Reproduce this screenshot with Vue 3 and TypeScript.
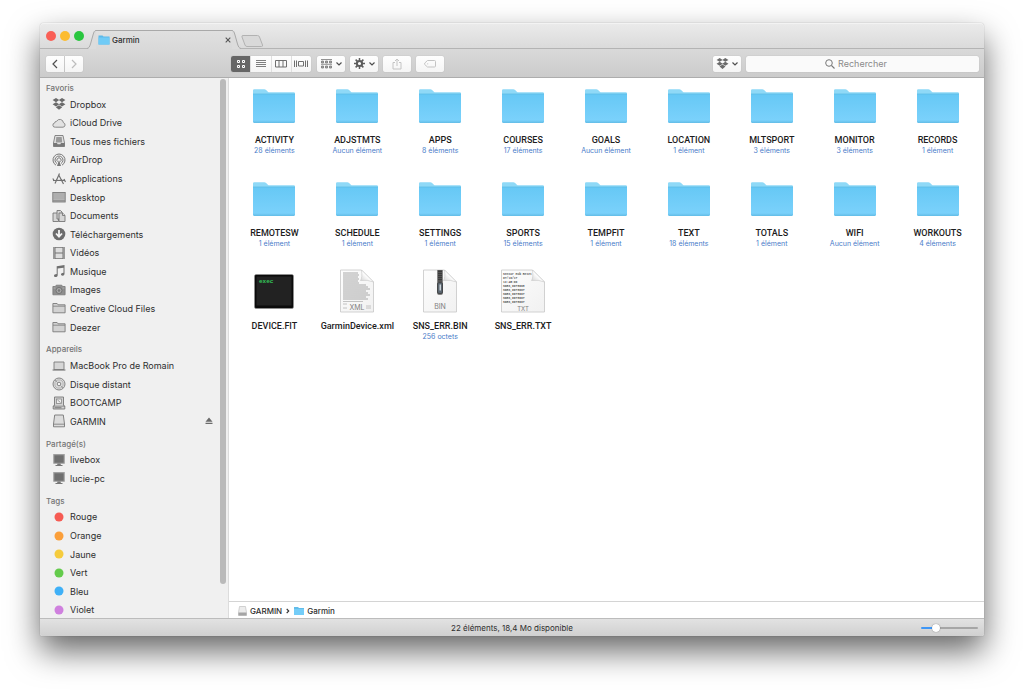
<script setup lang="ts">
import { ref } from 'vue'

interface Place {
  name: string
  icon?: string
  color?: string
  ejectable?: boolean
}

interface Section {
  title: string
  places: Place[]
}

interface Entry {
  name: string
  kind: 'folder' | 'exec' | 'xml' | 'bin' | 'txt'
  info?: string
}

const sections: Section[] = [
  {
    title: 'Favoris',
    places: [
      { name: 'Dropbox', icon: 'dropbox' },
      { name: 'iCloud Drive', icon: 'cloud' },
      { name: 'Tous mes fichiers', icon: 'allfiles' },
      { name: 'AirDrop', icon: 'airdrop' },
      { name: 'Applications', icon: 'apps' },
      { name: 'Desktop', icon: 'desktop' },
      { name: 'Documents', icon: 'documents' },
      { name: 'Téléchargements', icon: 'download' },
      { name: 'Vidéos', icon: 'film' },
      { name: 'Musique', icon: 'music' },
      { name: 'Images', icon: 'camera' },
      { name: 'Creative Cloud Files', icon: 'folder' },
      { name: 'Deezer', icon: 'folder' },
    ],
  },
  {
    title: 'Appareils',
    places: [
      { name: 'MacBook Pro de Romain', icon: 'laptop' },
      { name: 'Disque distant', icon: 'disc' },
      { name: 'BOOTCAMP', icon: 'harddrive' },
      { name: 'GARMIN', icon: 'drive', ejectable: true },
    ],
  },
  {
    title: 'Partagé(s)',
    places: [
      { name: 'livebox', icon: 'monitor' },
      { name: 'lucie-pc', icon: 'monitor' },
    ],
  },
  {
    title: 'Tags',
    places: [
      { name: 'Rouge', color: '#f65b53' },
      { name: 'Orange', color: '#fb9f3a' },
      { name: 'Jaune', color: '#f5cb3c' },
      { name: 'Vert', color: '#64cb4c' },
      { name: 'Bleu', color: '#3fb0f7' },
      { name: 'Violet', color: '#cf80de' },
    ],
  },
]

const entries: Entry[] = [
  { name: 'ACTIVITY', kind: 'folder', info: '28 éléments' },
  { name: 'ADJSTMTS', kind: 'folder', info: 'Aucun élément' },
  { name: 'APPS', kind: 'folder', info: '8 éléments' },
  { name: 'COURSES', kind: 'folder', info: '17 éléments' },
  { name: 'GOALS', kind: 'folder', info: 'Aucun élément' },
  { name: 'LOCATION', kind: 'folder', info: '1 élément' },
  { name: 'MLTSPORT', kind: 'folder', info: '3 éléments' },
  { name: 'MONITOR', kind: 'folder', info: '3 éléments' },
  { name: 'RECORDS', kind: 'folder', info: '1 élément' },
  { name: 'REMOTESW', kind: 'folder', info: '1 élément' },
  { name: 'SCHEDULE', kind: 'folder', info: '1 élément' },
  { name: 'SETTINGS', kind: 'folder', info: '1 élément' },
  { name: 'SPORTS', kind: 'folder', info: '15 éléments' },
  { name: 'TEMPFIT', kind: 'folder', info: '1 élément' },
  { name: 'TEXT', kind: 'folder', info: '18 éléments' },
  { name: 'TOTALS', kind: 'folder', info: '1 élément' },
  { name: 'WIFI', kind: 'folder', info: 'Aucun élément' },
  { name: 'WORKOUTS', kind: 'folder', info: '4 éléments' },
  { name: 'DEVICE.FIT', kind: 'exec' },
  { name: 'GarminDevice.xml', kind: 'xml' },
  { name: 'SNS_ERR.BIN', kind: 'bin', info: '256 octets' },
  { name: 'SNS_ERR.TXT', kind: 'txt' },
]

const dropbox =
  '<path fill="#6b6b6b" d="M4 1 7.200 3.100 4 5.200.6 3.100zM10 1l3.400 2.100L10 5.200 6.800 3.100zM.6 7.300 4 5.200l3.200 2.100L4 9.400zM10 5.200l3.400 2.100L10 9.400 6.800 7.300zM3.800 10.300 7 8.200l3.200 2.100L7 12.800z"/>'

const glyphs: Record<string, string> = {
  dropbox,
  cloud:
    '<path fill="#e2e2e2" stroke="#808080" stroke-width=".9" d="M3.300 11.200h7.700a2.300 2.300 0 0 0 .4-4.500A3.600 3.600 0 0 0 4.700 5.200a2 2 0 0 0-2 1.800 2.100 2.100 0 0 0 .6 4.200z"/>',
  allfiles:
    '<path fill="#e0e0e0" stroke="#7b7b7b" stroke-width=".9" d="M3 1.500h8l1.500 7.500v3.500h-11V9z"/><path fill="#9a9a9a" d="M4.300 3h5.400l.5 5.500H3.800z"/><path fill="#777" d="M1.500 9H5l.6 1.300h2.800L9 9h3.500v3.500h-11z"/>',
  airdrop:
    '<g fill="none" stroke="#777" stroke-width="1"><path d="M4 12.200a6 6 0 1 1 6 0"/><path d="M5 10.500a4 4 0 1 1 4 0"/><path d="M5.800 8.700a2.100 2.100 0 1 1 2.400 0"/></g><path fill="#777" d="m7 7 2 6H5z"/>',
  apps:
    '<g fill="none" stroke="#717171" stroke-width="1.200"><path d="M7.500 1.500 3 11.500M6.500 2.500l5 9.500M1 8.500l12-.2"/><path d="M.8 6.500 2.300 9M12 7l1.500 3"/></g>',
  desktop:
    '<rect x=".8" y="2.500" width="12.400" height="9.500" fill="#b4b4b4" stroke="#7b7b7b" stroke-width=".9"/><path stroke="#999" stroke-width=".8" stroke-dasharray="1 1" d="M1.500 4h11M1.500 6h11M1.500 8h11"/><path stroke="#888" d="M1 10.800h12"/>',
  documents:
    '<g fill="#d6d6d6" stroke="#777" stroke-width=".9"><path d="M1 4h5.500v8.500H1z"/><path d="M5 1.500h3.500L10 3v7H5z"/><path d="M7 4h3.500l2.500 2.300v6.200H7z"/><path d="M10.500 4v2.500H13"/></g>',
  download:
    '<circle cx="7" cy="7" r="6.300" fill="#6c6c6c"/><path d="M7 3v6M4 6.500l3 3.200 3-3.200" fill="none" stroke="#f4f4f4" stroke-width="1.800"/>',
  film:
    '<path fill="#727272" d="M1.300 1h11.400v12H1.300z"/><path fill="#ddd" d="M3.500 1.700h7v4.700h-7zM3.500 7.500h7v4.800h-7z"/><path stroke="#c9c9c9" stroke-width=".9" stroke-dasharray="1 1" d="M2.400 1.500v11M11.600 1.500v11"/>',
  music:
    '<path fill="#6f6f6f" d="M4.700 2.300 12.500 1v8.800c0 1.200-.8 1.900-1.900 1.900-1 0-1.600-.5-1.600-1.200 0-1 1-1.600 2.500-1.700V3.700L5.700 4.600v6.300c0 1.300-.9 2.100-2.100 2.100-1 0-1.600-.6-1.600-1.300 0-1 1-1.600 2.700-1.700z"/>',
  camera:
    '<path fill="#8e8e8e" stroke="#777" stroke-width=".8" d="M.9 3.500h2.500l.8-1.300h5.600l.8 1.300h2.500v8.300H.9z"/><circle cx="7" cy="7.500" r="3" fill="#aaa" stroke="#666" stroke-width=".8"/><circle cx="7" cy="7.500" r="1.300" fill="#777"/><path stroke="#bbb" stroke-width=".7" d="M1.500 5h2M10.500 5h2"/>',
  folder:
    '<path fill="#d2d2d2" stroke="#7b7b7b" stroke-width=".9" d="M.9 11.800V2.500h4.200l1 1.300h7v8z"/><path stroke="#7b7b7b" stroke-width=".8" d="M1 5.200h12"/>',
  laptop:
    '<path fill="#d6d6d6" stroke="#7b7b7b" stroke-width=".9" d="M2 3h10v7.500H2z"/><path stroke="#7b7b7b" stroke-width="1.200" d="M.6 11h12.800"/>',
  disc:
    '<circle cx="7" cy="7" r="6" fill="#dcdcdc" stroke="#7b7b7b" stroke-width=".9"/><circle cx="7" cy="7" r="4.100" fill="none" stroke="#aaa" stroke-width=".8"/><circle cx="7" cy="7" r="1.800" fill="#f4f4f4" stroke="#7b7b7b" stroke-width=".9"/><path stroke="#909090" stroke-width=".8" d="m3 3 2.500 2.500M8.500 8.500 11 11"/>',
  harddrive:
    '<path fill="#d2d2d2" stroke="#777" stroke-width=".9" d="M2.500 1h9v8.500l1.300.5v3H1.200v-3l1.300-.5z"/><path fill="#777" d="M1.300 9.700h11.400v.9H1.300zM2.500 11.300h7v.9h-7z"/><rect x="4.500" y="3" width="5" height="4.500" fill="#eee" stroke="#888" stroke-width=".8"/><path stroke="#777" stroke-width=".7" d="m5.500 4 3 2.500"/>',
  drive:
    '<path fill="#dcdcdc" stroke="#777" stroke-width=".9" d="M2.700 1h8.600l1.200 9v2.800h-11V10z"/><path stroke="#777" stroke-width=".8" d="M1.500 10.200h11"/>',
  monitor:
    '<path fill="#6f6f6f" stroke="#a0a0a0" stroke-width="1.100" d="M1.800 1.600h10.400v8.600H1.800z"/><path fill="#777" d="M5.500 10.500h3l.4 1.500h1.600v1h-7v-1h1.600z"/>',
}

const xmlLines = Array.from({ length: 14 }, (_, i) => ({ y: 5 + i * 2, end: i < 6 ? 24 + (i % 2) : 32 + (i % 3) * 2 }))
const txtLines = ['Sensor Hub Reset', '07/10/17', '13:45:00', 'SNRS,0078698', 'SNRS,0078697', 'SNRS,0078697', 'SNRS,0078697', 'SNRS,0078697']

const views = ['Icônes', 'Liste', 'Colonnes', 'Cover Flow']
const currentView = ref('Icônes')
const query = ref('')
const zoom = ref(22)
</script>

<template>
  <div class="desktop">
    <div class="window">
      <header class="tabbar">
        <div class="lights">
          <button class="light close" aria-label="Fermer"></button>
          <button class="light minimize" aria-label="Réduire"></button>
          <button class="light zoom" aria-label="Agrandir"></button>
        </div>
        <div class="tab">
          <svg class="edge" width="9" height="19" viewBox="0 0 9 19">
            <path class="edge-fill" d="M0 19C2 18 2.500 17 3.500 14L6 5C6.800 2 7.500.5 9 .5V19z" />
            <path class="edge-line" d="M0 18.500C2 18 2.500 17 3.500 14L6 5C6.800 2 7.500.5 9 .5" />
          </svg>
          <div class="tab-body">
            <svg width="12" height="10" viewBox="0 0 12 10">
              <path fill="#5bb9ea" d="M.5 9.500v-9h4l1 1h6v8z" />
              <path fill="#70cbf6" d="M.5 2.500h11v7H.5z" />
            </svg>
            <span class="tab-title">Garmin</span>
            <button class="tab-close" aria-label="Fermer l’onglet">
              <svg width="6" height="6" viewBox="0 0 6 6"><path d="m.7.7 4.600 4.600M5.300.7.700 5.300" stroke="#555" stroke-width="1.100" /></svg>
            </button>
          </div>
          <svg class="edge" width="9" height="19" viewBox="0 0 9 19">
            <path class="edge-fill" d="M9 19C7 18 6.500 17 5.500 14L3 5C2.200 2 1.500.5 0 .5V19z" />
            <path class="edge-line" d="M9 18.500C7 18 6.500 17 5.500 14L3 5C2.200 2 1.500.5 0 .5" />
          </svg>
        </div>
        <button class="new-tab" aria-label="Nouvel onglet">
          <svg width="23" height="12" viewBox="0 0 23 12">
            <path d="M2 .5h14.500q1.500 0 2 1.500l3 8q.5 1.500-1 1.500H6q-1.500 0-2-1.500L1 2Q.5.500 2 .5z" fill="#d9d9d9" stroke="#b2b2b2" />
          </svg>
        </button>
      </header>

      <div class="toolbar">
        <div class="history">
          <button class="tool half first" aria-label="Précédent">
            <svg width="6" height="10" viewBox="0 0 6 10"><path class="stroke" d="M5 1 1 5l4 4" /></svg>
          </button>
          <button class="tool half last" aria-label="Suivant" disabled>
            <svg width="6" height="10" viewBox="0 0 6 10"><path class="stroke faint" d="m1 1 4 4-4 4" /></svg>
          </button>
        </div>
        <div class="segments">
          <button
            v-for="view in views"
            :key="view"
            class="segment"
            :class="{ active: view === currentView }"
            :aria-label="view"
            @click="currentView = view"
          >
            <svg v-if="view === 'Icônes'" width="10" height="10" viewBox="0 0 10 10">
              <path d="M1.500 1.500h2v2h-2zM6.500 1.500h2v2h-2zM1.500 6.500h2v2h-2zM6.500 6.500h2v2h-2z" fill="none" stroke="currentColor" />
            </svg>
            <svg v-else-if="view === 'Liste'" width="10" height="8" viewBox="0 0 10 8">
              <path d="M0 .5h10M0 2.500h10M0 4.500h10M0 6.500h10" stroke="currentColor" stroke-width=".9" />
            </svg>
            <svg v-else-if="view === 'Colonnes'" width="12" height="8" viewBox="0 0 12 8">
              <path d="M.5.500h11v6.500H.5zM4 .5V7M8 .5V7" fill="none" stroke="currentColor" />
            </svg>
            <svg v-else width="14" height="8" viewBox="0 0 14 8">
              <path d="M4.500 1.500h5v4.500h-5zM.5.500V7M2.500.500V7M11.500.500V7M13.500.500V7" fill="none" stroke="currentColor" />
            </svg>
          </button>
        </div>
        <button class="tool" aria-label="Organiser">
          <svg width="11" height="10" viewBox="0 0 11 10">
            <path d="M0 .5h11M0 5.300h11" stroke="#777" stroke-width=".8" />
            <path d="M.5 2h2v2h-2zM4.500 2h2v2h-2zM8.500 2h2v2h-2zM.5 7h2v2h-2zM4.500 7h2v2h-2zM8.500 7h2v2h-2z" fill="#aaa" stroke="#777" stroke-width=".8" />
          </svg>
          <svg width="6" height="4" viewBox="0 0 6 4"><path class="stroke" d="m.5.500 2.500 2.500L5.500.5" /></svg>
        </button>
        <button class="tool" aria-label="Actions">
          <svg width="11" height="11" viewBox="0 0 11 11">
            <circle cx="5.500" cy="5.500" r="2.600" fill="none" stroke="#5c5c5c" stroke-width="2" />
            <path d="M5.500 0v2.500M5.500 8.500V11M0 5.500h2.500M8.500 5.500H11M1.600 1.600l1.800 1.800M7.600 7.600l1.800 1.800M9.400 1.600 7.600 3.400M3.400 7.600 1.600 9.400" stroke="#5c5c5c" stroke-width="1.500" />
          </svg>
          <svg width="6" height="4" viewBox="0 0 6 4"><path class="stroke" d="m.5.500 2.500 2.500L5.500.5" /></svg>
        </button>
        <button class="tool" aria-label="Partager" disabled>
          <svg width="10" height="12" viewBox="0 0 10 12">
            <path d="M3 4.500H1v6.500h8V4.500H7M5 8V1M3 3l2-2 2 2" fill="none" stroke="#c4c4c4" />
          </svg>
        </button>
        <button class="tool" aria-label="Modifier les tags" disabled>
          <svg width="12" height="8" viewBox="0 0 12 8">
            <path d="M3.500.500h7q1 0 1 1v4.500q0 1-1 1h-7L.7 4.500v-1.400z" fill="none" stroke="#c4c4c4" />
            <circle cx="3.700" cy="3.800" r=".6" fill="#c4c4c4" />
          </svg>
        </button>
        <button class="tool dropbox" aria-label="Dropbox">
          <svg width="13" height="13" viewBox="0 0 14 14" v-html="dropbox"></svg>
          <svg width="6" height="4" viewBox="0 0 6 4"><path class="stroke" d="m.5.500 2.500 2.500L5.500.5" /></svg>
        </button>
        <label class="search">
          <svg v-show="!query" width="10" height="10" viewBox="0 0 10 10">
            <circle cx="4" cy="4" r="3.300" fill="none" stroke="#777" />
            <path d="m6.500 6.500 3 3" stroke="#777" stroke-width="1.100" />
          </svg>
          <input v-model="query" type="text" placeholder="Rechercher" aria-label="Rechercher" />
        </label>
      </div>

      <div class="body">
        <nav class="sidebar">
          <section v-for="section in sections" :key="section.title">
            <h2>{{ section.title }}</h2>
            <ul>
              <li v-for="place in section.places" :key="place.name">
                <a href="#">
                  <svg v-if="place.icon" width="14" height="14" viewBox="0 0 14 14" v-html="glyphs[place.icon]"></svg>
                  <svg v-else width="14" height="14" viewBox="0 0 14 14"><circle cx="7" cy="7" r="4.500" :fill="place.color" /></svg>
                  {{ place.name }}
                </a>
                <button v-if="place.ejectable" class="eject" aria-label="Éjecter">
                  <svg width="8" height="8" viewBox="0 0 8 8"><path d="m4 .5 3.500 4.200h-7zM.5 5.800h7v1.200h-7z" fill="#6b6b6b" /></svg>
                </button>
              </li>
            </ul>
          </section>
          <div class="scroll-thumb"></div>
        </nav>

        <main class="content">
          <svg class="defs" width="0" height="0" aria-hidden="true">
            <defs>
              <linearGradient id="folder-front" x1="0" y1="0" x2="0" y2="1">
                <stop offset="0" stop-color="#66c8f5" />
                <stop offset=".9" stop-color="#7ad1fb" />
                <stop offset="1" stop-color="#62bce6" />
              </linearGradient>
              <linearGradient id="paper" x1="0" y1="0" x2="1" y2="1">
                <stop offset="0" stop-color="#fdfdfd" />
                <stop offset="1" stop-color="#f1f1f1" />
              </linearGradient>
              <linearGradient id="curl" x1="0" y1="1" x2="1" y2="0">
                <stop offset="0" stop-color="#cfcfcf" />
                <stop offset=".5" stop-color="#fff" />
                <stop offset="1" stop-color="#e4e4e4" />
              </linearGradient>
            </defs>
          </svg>
          <ul class="grid">
            <li v-for="entry in entries" :key="entry.name">
              <button class="entry">
                <svg width="46" height="46" viewBox="0 0 46 46">
                  <template v-if="entry.kind === 'folder'">
                    <path d="M2 13V8.500q0-1.300 1.300-1.300h10q1 0 1.800.8l1.800 1.700q.6.600 1.500.6h24.300q1.300 0 1.300 1.300V16H2z" fill="#8fd9f7" />
                    <path d="M2 12h42v27.500q0 1.500-1.500 1.500h-39Q2 41 2 39.500z" fill="url(#folder-front)" />
                    <path d="M2 12h42" stroke="#5dbce6" stroke-width=".8" />
                  </template>
                  <template v-else-if="entry.kind === 'exec'">
                    <rect x="3.500" y="6.500" width="39" height="34" rx="1.500" fill="#0b0b0b" stroke="#999" stroke-width=".5" />
                    <rect x="5.500" y="8.500" width="35" height="29" fill="#222" />
                    <text x="8" y="15" class="exec-text">exec</text>
                  </template>
                  <template v-else-if="entry.kind === 'xml'">
                    <path d="M6.500 2h21l12 12v30h-33z" fill="url(#paper)" stroke="#c6c6c6" stroke-width=".8" />
                    <path v-for="line in xmlLines" :key="line.y" :d="`M9 ${line.y}H${line.end}`" stroke="#a8a8a8" stroke-width="1" />
                    <path d="M9 33.500h20M9 36h4M9 40h4M32 38h5M32 40h5" stroke="#b5b5b5" stroke-width=".8" />
                    <path d="M27.500 2q1 8-1 10.500 7-1 13 1.500z" fill="url(#curl)" stroke="#c6c6c6" stroke-width=".6" />
                    <text x="23" y="42" class="doc-text">XML</text>
                  </template>
                  <template v-else-if="entry.kind === 'bin'">
                    <path d="M6.500 2h21l12 12v30h-33z" fill="url(#paper)" stroke="#c6c6c6" stroke-width=".8" />
                    <path d="M27.500 2q1 8-1 10.500 7-1 13 1.500z" fill="url(#curl)" stroke="#c6c6c6" stroke-width=".6" />
                    <path d="M20 2h6v23q0 2-3 2t-3-2z" fill="#858585" />
                    <path d="M23 2.500v11" stroke="#222" stroke-width="4" stroke-dasharray="1.200 .8" />
                    <rect x="20.500" y="14.500" width="5" height="11" rx="1.500" fill="#5b6670" stroke="#333" stroke-width=".7" />
                    <path d="M22.500 16.500h1.500v6h-1.500z" fill="#ccd3d8" />
                    <text x="23" y="41" class="doc-text">BIN</text>
                  </template>
                  <template v-else>
                    <path d="M1.500 2h31l12 12v30h-43z" fill="url(#paper)" stroke="#c6c6c6" stroke-width=".8" />
                    <text v-for="(line, i) in txtLines" :key="i" x="3" :y="7 + i * 4" class="log-text">{{ line }}</text>
                    <path d="M32.500 2q1 8-1 10.500 7-1 13 1.500z" fill="url(#curl)" stroke="#c6c6c6" stroke-width=".6" />
                    <text x="23" y="43" class="doc-text small">TXT</text>
                  </template>
                </svg>
                <span class="name">{{ entry.name }}</span>
                <span class="info">{{ entry.info }}</span>
              </button>
            </li>
          </ul>
          <footer class="path">
            <svg width="9" height="10" viewBox="0 0 9 10">
              <path d="M1.500.500h6l1 6v3h-8v-3z" fill="#ececec" stroke="#c0c0c0" stroke-width=".7" />
              <path d="M.5 6.500h8v3h-8z" fill="#a5a5a5" />
            </svg>
            <span>GARMIN</span>
            <svg class="chevron" width="4" height="6" viewBox="0 0 4 6"><path d="m.7.800 2 2.200-2 2.200" fill="none" stroke="#333" stroke-width="1.200" /></svg>
            <svg width="10" height="8" viewBox="0 0 10 8">
              <path fill="#62bdea" d="M0 8V0h4l1 1h5v7z" />
              <path fill="#74cdf8" d="M0 2h10v6H0z" />
            </svg>
            <span>Garmin</span>
          </footer>
        </main>
      </div>

      <footer class="status">
        <span class="summary">22 éléments, 18,4 Mo disponible</span>
        <input v-model="zoom" class="size" type="range" min="0" max="100" aria-label="Taille des icônes" />
      </footer>
    </div>
  </div>
</template>

<style>
html,
body {
  margin: 0;
  background: #fff;
}
</style>

<style scoped>
.desktop {
  box-sizing: border-box;
  height: 100vh;
  padding: 23px 40px 57px;
  overflow: hidden;
  font-family: Inter, 'Liberation Sans', sans-serif;
  font-size: 9px;
  color: #2e2e2e;
}

button {
  margin: 0;
  padding: 0;
  border: 0;
  background: none;
  font: inherit;
  color: inherit;
}

ul {
  margin: 0;
  padding: 0;
  list-style: none;
}

svg {
  flex: none;
  display: block;
}

.window {
  height: 100%;
  display: flex;
  flex-direction: column;
  border-radius: 4px 4px 2px 2px;
  box-shadow:
    0 0 1px rgba(0, 0, 0, 0.45),
    0 15px 32px rgba(0, 0, 0, 0.6);
}

.tabbar {
  flex: none;
  box-sizing: border-box;
  height: 26px;
  display: flex;
  align-items: flex-end;
  border-radius: 4px 4px 0 0;
  background: linear-gradient(#ebebeb, #dadada);
  box-shadow: inset 0 -1px #b4b4b4, inset 0 1px #f3f3f3;
}

.lights {
  display: flex;
  gap: 4px;
  align-self: center;
  padding-left: 6px;
  width: 41px;
}

.light {
  width: 10px;
  height: 10px;
  border-radius: 50%;
}

.close {
  background: #f95f56;
}

.minimize {
  background: #fcbc2f;
}

.zoom {
  background: #2ac63f;
}

.tab {
  flex: 0 1 154px;
  display: flex;
}

.edge-fill {
  fill: #dcdcdc;
}

.edge-line {
  fill: none;
  stroke: #a9a9a9;
}

.tab-body {
  flex: 1;
  box-sizing: border-box;
  height: 19px;
  display: flex;
  align-items: center;
  gap: 2px;
  padding: 0 1px 0 2px;
  border-top: 1px solid #a9a9a9;
  background: linear-gradient(#e0e0e0, #d9d9d9);
}

.tab-title {
  flex: 1;
  font-size: 8px;
  font-weight: 500;
}

.new-tab {
  align-self: center;
  padding-top: 9px;
}

.toolbar {
  flex: none;
  box-sizing: border-box;
  height: 29px;
  display: flex;
  align-items: center;
  gap: 5px;
  padding: 1px 5px 0 6px;
  border-bottom: 1px solid #adadad;
  background: linear-gradient(#d9d9d9, #cbcbcb);
}

.history {
  display: flex;
  gap: 1px;
  width: 180px;
}

.tool,
.segments {
  height: 16px;
  border-radius: 2px;
  background: linear-gradient(#fefefe, #f5f5f5);
  box-shadow: 0 0 1px rgba(0, 0, 0, 0.25);
}

.tool {
  width: 28px;
  display: flex;
  align-items: center;
  justify-content: center;
  gap: 4px;
}

.half {
  width: 18px;
}

.first {
  border-radius: 2px 0 0 2px;
}

.last {
  border-radius: 0 2px 2px 0;
}

.stroke {
  fill: none;
  stroke: #4f4f4f;
  stroke-width: 1.2;
}

.faint {
  stroke: #bdbdbd;
}

.segments {
  width: 80px;
  margin-right: 1px;
  display: flex;
  overflow: hidden;
  color: #6f6f6f;
}

.segment {
  flex: 1;
  display: flex;
  align-items: center;
  justify-content: center;
  border-right: 1px solid #dedede;
}

.segment:last-child {
  border-right: 0;
}

.segment.active {
  background: #666;
  color: #fff;
}

.dropbox {
  margin-left: auto;
  gap: 3px;
}

.search {
  position: relative;
  flex: 0 1 233px;
  display: flex;
}

.search svg {
  position: absolute;
  left: calc(50% - 38px);
  top: 3px;
}

.search input {
  width: 100%;
  height: 16px;
  box-sizing: border-box;
  padding: 0;
  border: 0;
  border-radius: 2px;
  background: #fafafa;
  box-shadow: 0 0 1px rgba(0, 0, 0, 0.25);
  font: inherit;
  text-align: center;
}

.search input::placeholder {
  color: #8a8a8a;
  opacity: 1;
}

.body {
  flex: 1;
  min-height: 0;
  display: flex;
}

.sidebar {
  position: relative;
  flex: none;
  box-sizing: border-box;
  width: 189px;
  display: flex;
  flex-direction: column;
  overflow: hidden;
  border-right: 1px solid #dcdcdc;
  background: #f0f0f0;
}

.sidebar section,
.sidebar ul {
  display: contents;
}

h2 {
  flex: none;
  height: 20px;
  margin: 0;
  padding-left: 6px;
  font-size: 8px;
  line-height: 28px;
  font-weight: 500;
  color: #747474;
}

.sidebar section:first-child h2 {
  height: 16px;
  line-height: 20px;
}

.sidebar li {
  flex: 1 1 0;
  box-sizing: border-box;
  min-height: 16px;
  display: flex;
  align-items: center;
  justify-content: space-between;
  padding: 2px 15px 0 12px;
}

.sidebar a {
  display: flex;
  align-items: center;
  gap: 4px;
  color: inherit;
  text-decoration: none;
  white-space: nowrap;
}

.scroll-thumb {
  position: absolute;
  top: 1px;
  right: 2px;
  bottom: 34px;
  width: 6px;
  border-radius: 3px;
  background: #bababa;
}

.content {
  flex: 1;
  min-width: 0;
  display: flex;
  flex-direction: column;
  background: #fff;
}

.defs {
  position: absolute;
}

.grid {
  flex: 1;
  min-height: 0;
  display: grid;
  grid-template-columns: repeat(9, 1fr);
  align-content: start;
  row-gap: 19px;
  padding: 4px 5px 0 4px;
  overflow: hidden;
}

.entry {
  width: 100%;
  display: flex;
  flex-direction: column;
  align-items: center;
}

.name {
  height: 12px;
  margin-top: 6px;
  font-family: Roboto, Inter, sans-serif;
  line-height: 12px;
  font-weight: 500;
  color: #1c1c1c;
}

.info {
  height: 10px;
  font-size: 7px;
  line-height: 10px;
  color: #4a7cc9;
}

.exec-text {
  font: bold 6px 'Liberation Mono', monospace;
  fill: #34c759;
}

.doc-text {
  font-size: 7px;
  text-anchor: middle;
  fill: #808080;
}

.doc-text.small {
  font-size: 6px;
}

.log-text {
  font: bold 3px 'Liberation Mono', monospace;
  fill: #555;
}

.path {
  flex: none;
  box-sizing: border-box;
  height: 17px;
  display: flex;
  align-items: center;
  gap: 3px;
  padding: 1px 0 0 9px;
  border-top: 1px solid #d4d4d4;
  font-size: 8px;
  font-weight: 500;
}

.chevron {
  margin: 0 1px;
}

.status {
  flex: none;
  box-sizing: border-box;
  height: 18px;
  display: grid;
  grid-template-columns: 1fr auto 1fr;
  align-items: center;
  padding: 0 6px;
  border-top: 1px solid #bcbcbc;
  border-radius: 0 0 2px 2px;
  background: linear-gradient(#e2e2e2, #d0d0d0);
  font-size: 8px;
}

.summary {
  grid-column: 2;
}

.size {
  appearance: none;
  justify-self: end;
  width: 57px;
  height: 10px;
  margin: 0;
  background: none;
}

.size::-webkit-slider-runnable-track {
  height: 2px;
  border-radius: 1px;
  background: linear-gradient(to right, #3f97f6 24%, #a6a6a6 24%);
}

.size::-webkit-slider-thumb {
  appearance: none;
  width: 8px;
  height: 8px;
  margin-top: -3px;
  border-radius: 50%;
  background: #fff;
  box-shadow: 0 0 1px rgba(0, 0, 0, 0.6);
}
</style>
